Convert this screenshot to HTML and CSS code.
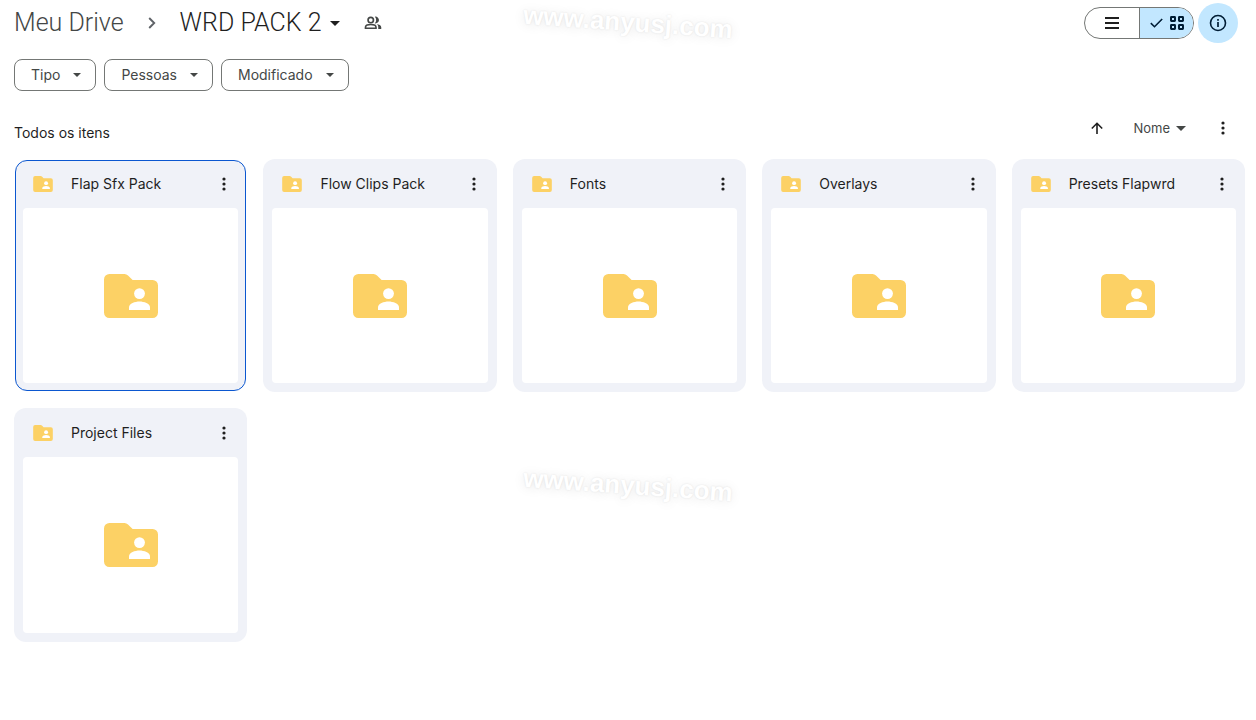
FILE: index.html
```html
<!DOCTYPE html>
<html lang="pt-BR">
<head>
<meta charset="utf-8">
<title>WRD PACK 2 - Meu Drive</title>
<meta name="viewport" content="width=device-width, initial-scale=1">
<link rel="stylesheet" href="styles.css">
</head>
<body>
<svg class="symbols" aria-hidden="true">
  <symbol id="folder" viewBox="0 0 54 44">
    <path fill="#fcd165" d="M5.400 0H20.500Q22.500 0 24 1.600L28.600 6H48.600A5.400 5.400 0 0 1 54 11.400V38.600A5.400 5.400 0 0 1 48.600 44H5.400A5.400 5.400 0 0 1 0 38.600V5.400A5.400 5.400 0 0 1 5.400 0Z"/>
    <circle class="person" cx="35.500" cy="19.600" r="5.400"/>
    <path class="person" d="M25 36V33.200C25 29.500 31 27.400 35.500 27.400S46 29.500 46 33.200V36Z"/>
  </symbol>
  <symbol id="caret" viewBox="0 0 10 5"><path fill="currentColor" d="M0 0H10L5 5Z"/></symbol>
  <symbol id="dots" viewBox="0 0 4 14"><g fill="currentColor"><circle cx="2" cy="2" r="1.600"/><circle cx="2" cy="7" r="1.600"/><circle cx="2" cy="12" r="1.600"/></g></symbol>
</svg>
<header class="topbar">
  <nav class="crumbs" aria-label="Caminho">
    <a class="crumb" href="#">Meu Drive</a>
    <svg class="chevron" viewBox="0 0 8 12" aria-hidden="true"><path d="M1.200 1L6.200 6L1.200 11" fill="none" stroke="currentColor" stroke-width="1.900"/></svg>
    <button class="crumb crumb-current" type="button">WRD PACK 2<svg class="caret" aria-hidden="true"><use href="#caret"/></svg></button>
    <button class="people" type="button" aria-label="Compartilhado"><svg viewBox="0 0 24 24" aria-hidden="true"><g fill="none" stroke="currentColor" stroke-width="2.200"><circle cx="9" cy="8" r="3.600"/><path d="M2 19V17.500C2 15 6 14 9 14S16 15 16 17.500V19Z"/></g><path fill="currentColor" d="M14.500 3.600A4.500 4.500 0 1 1 14.500 12.400C16.800 10.200 16.800 5.800 14.500 3.600ZM17 13.400C20 14 23 15.300 23 17.500V20H19V17.300C19 15.600 18.200 14.300 17 13.400Z"/></svg></button>
  </nav>
  <div class="tools">
    <div class="view-switch">
      <button class="view" type="button" aria-label="Lista"><svg width="14" height="12" viewBox="0 0 14 12" aria-hidden="true"><path d="M0 1H14M0 6H14M0 11H14" stroke="currentColor" stroke-width="2"/></svg></button>
      <button class="view view-on" type="button" aria-label="Grade" aria-pressed="true"><svg width="13" height="10" viewBox="0 0 13 10" aria-hidden="true"><path d="M.8 5.100L4.500 8.700L12.200 1" fill="none" stroke="currentColor" stroke-width="1.600"/></svg><svg width="14" height="14" viewBox="0 0 14 14" aria-hidden="true"><g fill="none" stroke="currentColor" stroke-width="2"><rect x="1" y="1" width="4" height="4" rx=".4"/><rect x="9" y="1" width="4" height="4" rx=".4"/><rect x="1" y="9" width="4" height="4" rx=".4"/><rect x="9" y="9" width="4" height="4" rx=".4"/></g></svg></button>
    </div>
    <button class="info" type="button" aria-label="Detalhes"><svg width="18" height="18" viewBox="0 0 18 18" aria-hidden="true"><circle cx="9" cy="9" r="7.500" fill="none" stroke="currentColor" stroke-width="1.600"/><path d="M9 5V6.700M9 8V13" stroke="currentColor" stroke-width="1.700"/></svg></button>
  </div>
</header>
<div class="filters">
  <button class="chip" type="button">Tipo<svg class="caret-small" aria-hidden="true"><use href="#caret"/></svg></button>
  <button class="chip" type="button">Pessoas<svg class="caret-small" aria-hidden="true"><use href="#caret"/></svg></button>
  <button class="chip" type="button">Modificado<svg class="caret-small" aria-hidden="true"><use href="#caret"/></svg></button>
</div>
<main>
  <div class="list-head">
    <h2 class="list-title">Todos os itens</h2>
    <div class="sort">
      <button class="plain" type="button" aria-label="Inverter ordem"><svg width="12" height="12" viewBox="0 0 12 12" aria-hidden="true"><path d="M6 12V1.500M.8 6.500L6 1.300L11.200 6.500" fill="none" stroke="currentColor" stroke-width="1.600"/></svg></button>
      <button class="plain sort-name" type="button">Nome<svg class="caret" aria-hidden="true"><use href="#caret"/></svg></button>
      <button class="plain" type="button" aria-label="Mais opções"><svg class="dots" aria-hidden="true"><use href="#dots"/></svg></button>
    </div>
  </div>
  <div class="grid">
    <article class="card card-selected"><div class="card-head"><svg class="folder-small" aria-hidden="true"><use href="#folder"/></svg><h3 class="name">Flap Sfx Pack</h3><button class="plain" type="button" aria-label="Mais ações"><svg class="dots" aria-hidden="true"><use href="#dots"/></svg></button></div><div class="preview"><svg class="folder-big" aria-hidden="true"><use href="#folder"/></svg></div></article>
    <article class="card"><div class="card-head"><svg class="folder-small" aria-hidden="true"><use href="#folder"/></svg><h3 class="name">Flow Clips Pack</h3><button class="plain" type="button" aria-label="Mais ações"><svg class="dots" aria-hidden="true"><use href="#dots"/></svg></button></div><div class="preview"><svg class="folder-big" aria-hidden="true"><use href="#folder"/></svg></div></article>
    <article class="card"><div class="card-head"><svg class="folder-small" aria-hidden="true"><use href="#folder"/></svg><h3 class="name">Fonts</h3><button class="plain" type="button" aria-label="Mais ações"><svg class="dots" aria-hidden="true"><use href="#dots"/></svg></button></div><div class="preview"><svg class="folder-big" aria-hidden="true"><use href="#folder"/></svg></div></article>
    <article class="card"><div class="card-head"><svg class="folder-small" aria-hidden="true"><use href="#folder"/></svg><h3 class="name">Overlays</h3><button class="plain" type="button" aria-label="Mais ações"><svg class="dots" aria-hidden="true"><use href="#dots"/></svg></button></div><div class="preview"><svg class="folder-big" aria-hidden="true"><use href="#folder"/></svg></div></article>
    <article class="card"><div class="card-head"><svg class="folder-small" aria-hidden="true"><use href="#folder"/></svg><h3 class="name">Presets Flapwrd</h3><button class="plain" type="button" aria-label="Mais ações"><svg class="dots" aria-hidden="true"><use href="#dots"/></svg></button></div><div class="preview"><svg class="folder-big" aria-hidden="true"><use href="#folder"/></svg></div></article>
    <article class="card"><div class="card-head"><svg class="folder-small" aria-hidden="true"><use href="#folder"/></svg><h3 class="name">Project Files</h3><button class="plain" type="button" aria-label="Mais ações"><svg class="dots" aria-hidden="true"><use href="#dots"/></svg></button></div><div class="preview"><svg class="folder-big" aria-hidden="true"><use href="#folder"/></svg></div></article>
  </div>
</main>
<span class="watermark watermark-top">www.anyusj.com</span>
<span class="watermark watermark-middle">www.anyusj.com</span>
</body>
</html>
```
FILE: styles.css
```css
* { box-sizing: border-box; }
body {
  margin: 0;
  padding: 3px 11px 24px 14px;
  position: relative;
  background: #fff;
  color: #1f1f1f;
  font: 14px/20px Inter, "Open Sans", sans-serif;
}
button { font: inherit; color: inherit; background: none; border: 0; padding: 0; cursor: pointer; }
svg { display: block; flex: none; }
h2, h3 { margin: 0; font: inherit; }
.symbols { position: absolute; width: 0; height: 0; }
.person { fill: #fff; }

.topbar { display: flex; justify-content: space-between; height: 40px; padding-right: 7px; }
.crumbs { display: flex; align-items: center; }
.crumb { font-family: Roboto, sans-serif; font-size: 25px; font-weight: 300; line-height: 32px; color: #444746; text-decoration: none; white-space: nowrap; }
.crumb-current { display: flex; align-items: center; gap: 8px; color: #1f1f1f; }
.chevron { width: 8px; height: 12px; margin: 0 24px; color: #5f6368; }
.caret { width: 10px; height: 5px; }
.people { margin-left: 24px; color: #444746; }
.people svg { width: 18px; height: 18px; }

.tools { display: flex; align-items: center; gap: 4px; }
.view-switch { display: flex; height: 32px; border: 1px solid #747775; border-radius: 16px; overflow: hidden; }
.view { display: flex; align-items: center; justify-content: center; gap: 7px; width: 54px; }
.view-on { background: #c2e7ff; color: #001d35; border-left: 1px solid #747775; }
.info { display: grid; place-items: center; width: 40px; height: 40px; border-radius: 50%; background: #c2e7ff; color: #001d35; }

.filters { display: flex; gap: 8px; margin-top: 16px; }
.chip { display: flex; align-items: center; gap: 13px; height: 32px; padding: 0 14px 0 16px; border: 1px solid #747775; border-radius: 8px; color: #444746; }
.caret-small { width: 8px; height: 4px; }

.list-head { display: flex; justify-content: space-between; align-items: flex-start; margin-top: 27px; padding-right: 20px; }
.list-title { margin-top: 5px; }
.sort { display: flex; align-items: center; gap: 30px; height: 20px; color: #1f1f1f; }
.plain { display: flex; align-items: center; }
.sort-name { gap: 6px; padding-right: 5px; font-size: 13px; color: #444746; }
.dots { width: 4px; height: 14px; }

.grid { display: grid; grid-template-columns: repeat(5, 1fr); gap: 16px; margin-top: 16px; }
.card { display: flex; flex-direction: column; aspect-ratio: 1; padding: 0 9px 9px; border-radius: 12px; background: #f0f2f8; }
.card-selected { margin: 1px; padding: 0 7px 7px; border: 1px solid #0b57d0; }
.card-head { display: flex; align-items: center; height: 49px; padding: 0 12px 0 10px; }
.card-selected .card-head { height: 47px; padding-bottom: 2px; }
.folder-small { width: 20px; height: 16px; }
.name { flex: 1; min-width: 0; margin-left: 18px; overflow: hidden; white-space: nowrap; text-overflow: ellipsis; }
.preview { flex: 1; display: grid; place-items: center; background: #fff; border-radius: 4px; }
.folder-big { width: 54px; height: 44px; }

.watermark {
  position: absolute;
  left: 50%;
  transform: translateX(-50%) rotate(4deg);
  font: bold 26px/32px "Liberation Sans", sans-serif;
  color: #fff;
  text-shadow: 0 0 2px rgba(0, 0, 0, .1), 0 1px 12px rgba(0, 0, 0, .1);
  pointer-events: none;
}
.watermark-top { top: 6px; }
.watermark-middle { top: 469px; }
```
